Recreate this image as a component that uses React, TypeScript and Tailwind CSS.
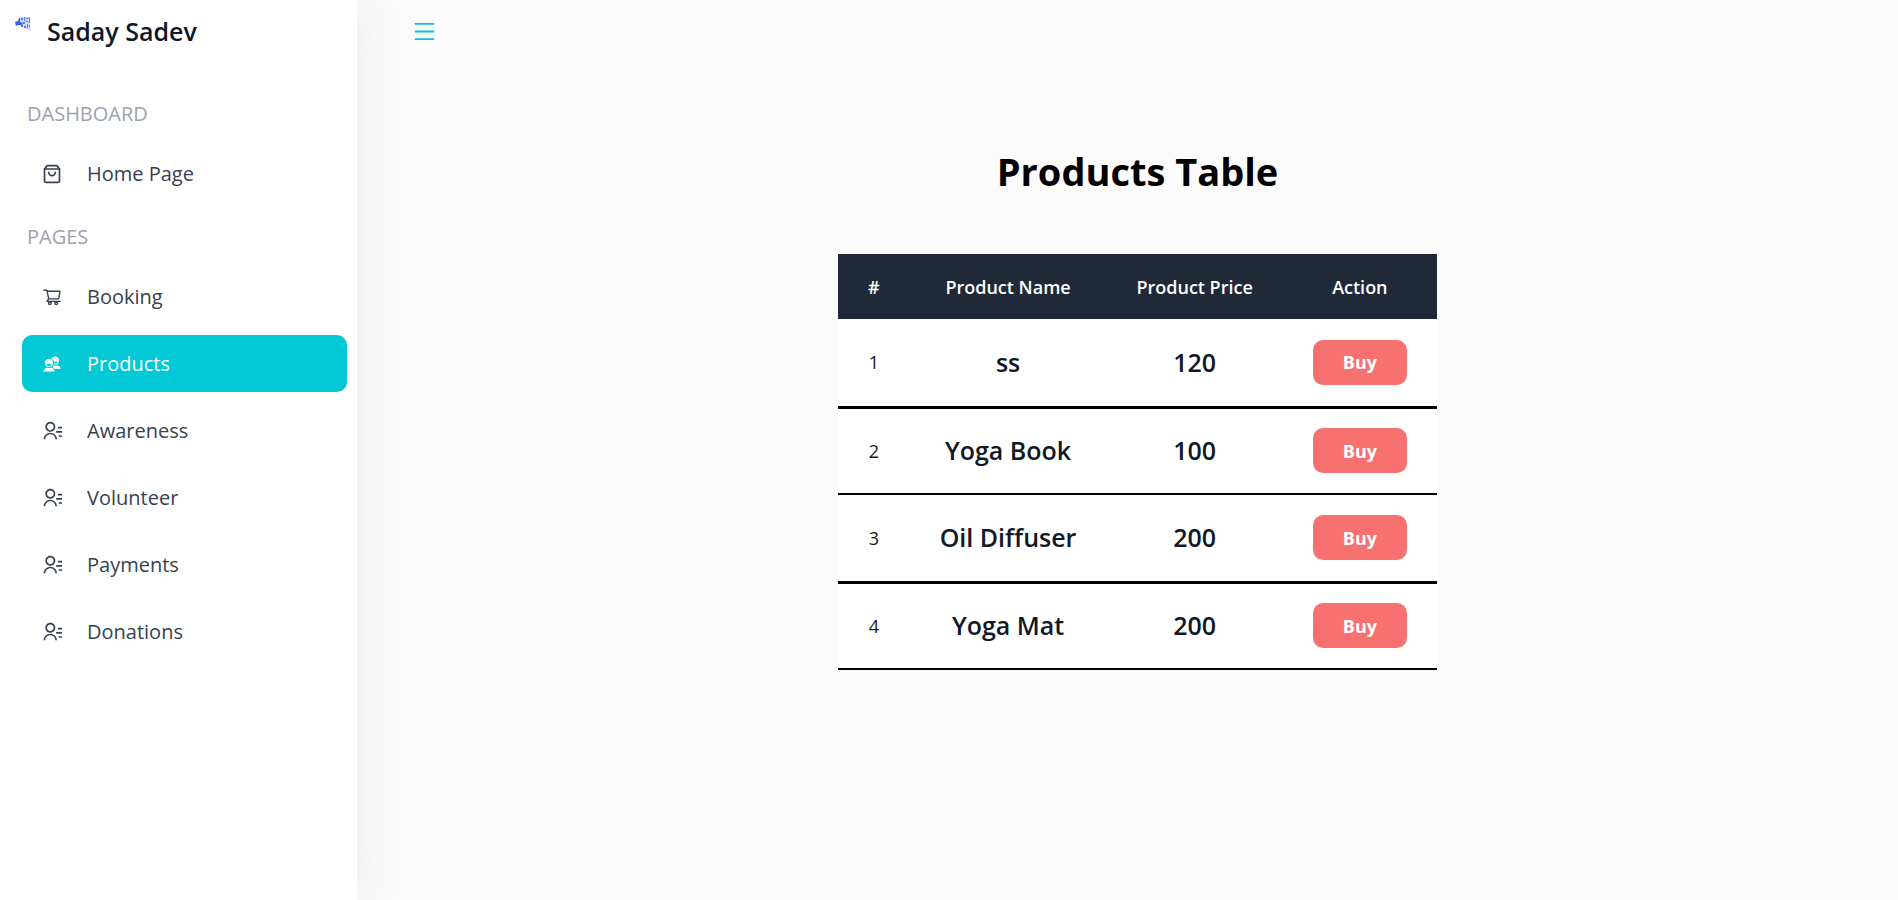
import React from 'react';
import { AiOutlineMenu, AiOutlineShoppingCart } from 'react-icons/ai';
import { FiShoppingBag } from 'react-icons/fi';
import { IoMdContacts } from 'react-icons/io';
import { RiContactsLine } from 'react-icons/ri';
import type { IconType } from 'react-icons';

type NavLink = { label: string; Icon: IconType; active?: boolean };
type NavSection = { title: string; links: NavLink[] };

const sections: NavSection[] = [
  { title: 'Dashboard', links: [{ label: 'Home Page', Icon: FiShoppingBag }] },
  {
    title: 'Pages',
    links: [
      { label: 'Booking', Icon: AiOutlineShoppingCart },
      { label: 'Products', Icon: IoMdContacts, active: true },
      { label: 'Awareness', Icon: RiContactsLine },
      { label: 'Volunteer', Icon: RiContactsLine },
      { label: 'Payments', Icon: RiContactsLine },
      { label: 'Donations', Icon: RiContactsLine },
    ],
  },
];

const products = [
  { name: 'ss', price: 120 },
  { name: 'Yoga Book', price: 100 },
  { name: 'Oil Diffuser', price: 200 },
  { name: 'Yoga Mat', price: 200 },
];

function Logo() {
  return (
    <svg viewBox="0 0 16 16" className="size-4 shrink-0" aria-hidden="true">
      <path d="M4 1h11v9l1 5-5-2-3-3H4z" fill="#c9d8f8" />
      <path d="M0 6l3-1 1-3h1v4l3 1-1 2H3l-2 1z" fill="#3d5fd9" />
      <path d="M6 2h2v2H6zM9 1h1v4H9zM11 2h2v1h-2zM14 1h1v6h-1zM8 6h2v2H8zM11 5h2v1h-2zM6 9h2v2H6zM9 10h2v2H9zM12 8h1v4h-1zM14 9h1v2h-1z" fill="#5c7fe6" />
    </svg>
  );
}

function Sidebar() {
  return (
    <aside className="w-[357px] shrink-0 bg-white pr-2.5 shadow-[0_0_50px_rgba(0,0,0,0.08)]">
      <a href="#home" className="flex h-16 items-center gap-4 pl-[15px] text-[25px] font-semibold text-slate-900">
        <span className="-mt-4">
          <Logo />
        </span>
        Saday Sadev
      </a>
      <nav className="mt-[35px]">
        {sections.map(({ title, links }) => (
          <section key={title} className="mb-5">
            <h2 className="ml-[27px] text-xl leading-[30px] text-[#9ca3af] uppercase">{title}</h2>
            <ul className="mt-4 ml-[22px] flex flex-col gap-2.5">
              {links.map(({ label, Icon, active }) => (
                <li key={label}>
                  <a
                    href={`#${label}`}
                    className={
                      active
                        ? 'flex h-[57px] items-center gap-[25px] rounded-[10px] bg-[#03c9d7] pl-5 text-xl text-white'
                        : 'flex h-[57px] items-center gap-[25px] rounded-[10px] pl-5 text-xl text-[#374151]'
                    }
                  >
                    <Icon className="size-5" aria-hidden="true" />
                    {label}
                  </a>
                </li>
              ))}
            </ul>
          </section>
        ))}
      </nav>
    </aside>
  );
}

function ProductsTable() {
  return (
    <table className="bg-white text-center">
      <thead>
        <tr className="h-[65px] bg-[#1f2937] text-lg text-white">
          <th className="px-[30px] font-semibold">#</th>
          <th className="px-[30px] font-semibold">Product Name</th>
          <th className="px-[30px] font-semibold">Product Price</th>
          <th className="px-[30px] font-semibold">Action</th>
        </tr>
      </thead>
      <tbody>
        {products.map(({ name, price }, index) => (
          <tr key={name} className="border-black odd:h-[88px] odd:border-b-3 even:h-[87px] even:border-b-2">
            <td className="px-[30px] text-lg text-[#111827]">{index + 1}</td>
            <td className="px-[30px] text-[25px] font-semibold text-[#111827]">{name}</td>
            <td className="px-[30px] text-[25px] font-semibold text-[#111827]">{price}</td>
            <td className="px-[30px]">
              <button type="button" className="h-[45px] rounded-[10px] bg-[#f87171] px-[30px] text-lg font-bold text-white">
                Buy
              </button>
            </td>
          </tr>
        ))}
      </tbody>
    </table>
  );
}

export default function App() {
  return (
    <div className="flex min-h-screen bg-[#fbfbfb] font-['Open_Sans',sans-serif]">
      <Sidebar />
      <div className="flex-1">
        <header className="flex h-[62px] items-center pl-[55px]">
          <button type="button" aria-label="Toggle menu" className="text-[#03c9d7]">
            <AiOutlineMenu className="size-[25px]" />
          </button>
        </header>
        <main className="flex flex-col items-center pt-[84px] pl-5">
          <h1 className="mb-[58px] text-[38px] leading-[50px] font-bold text-black">Products Table</h1>
          <ProductsTable />
        </main>
      </div>
    </div>
  );
}
